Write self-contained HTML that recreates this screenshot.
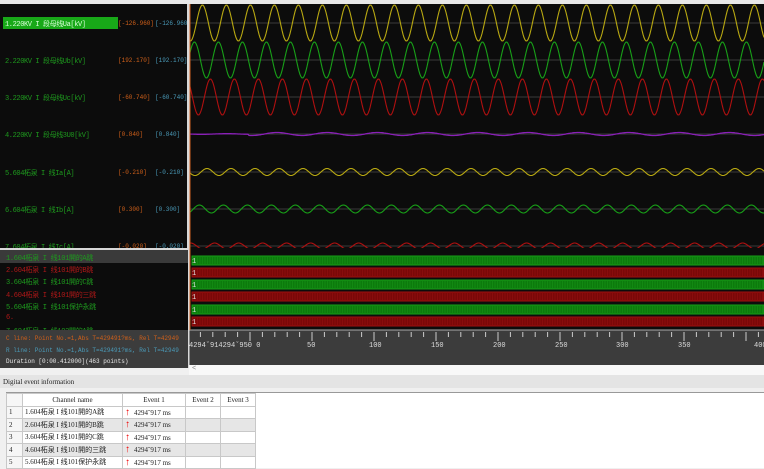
<!DOCTYPE html>
<html><head><meta charset="utf-8"><style>
*{margin:0;padding:0;box-sizing:border-box}
body{width:764px;height:468px;overflow:hidden;background:#f0f0f0;font-family:"Liberation Mono","Noto Sans CJK SC",monospace;position:relative}
.a{position:absolute;white-space:nowrap}
#left{left:0;top:4px;width:188px;height:244px;background:#0c0c0c;overflow:hidden}
.lbl{font-size:7px;color:#1e9a1e;letter-spacing:-0.4px}
.v1{font-size:6px;color:#d0601a}
.v2{font-size:6px;color:#4a9ab8}
#dl{left:0;top:250px;width:188px;height:80px;background:#0c0c0c;overflow:hidden}
.dr{position:absolute;left:6px;font-size:7px;letter-spacing:-0.3px}
#info{left:0;top:330px;width:188px;height:38px;background:#3c3c3c;font-size:6px;overflow:hidden}
table{border-collapse:collapse;font-size:7px;font-family:"Liberation Serif","Noto Sans CJK SC",serif}
td{border:1px solid #c8c8c8;height:12.5px;padding:0 2px;background:#fff;color:#222}
tr.g td{background:#e6e6e6}
td.n{background:#f6f6f6!important;width:16px}
.ar{color:#e00;font-size:10px;font-weight:bold;margin-right:4px}
</style></head><body>
<div class="a" style="left:0;top:0;width:764px;height:4px;background:#e8e8e8"></div>
<div class="a" id="left">
<div class="a" style="left:3px;top:13px;width:115px;height:12px;background:#18a818"></div>
<div class="a lbl" style="left:5px;top:15px;color:#d8ffd8">1.220KV I 段母线Ua[kV]</div>
<div class="a v1" style="left:118px;top:16px">[-126.960]</div><div class="a v2" style="left:155px;top:16px">[-126.960</div>
<div class="a lbl" style="left:5px;top:52px">2.220KV I 段母线Ub[kV]</div>
<div class="a v1" style="left:118px;top:53px">[192.170]</div><div class="a v2" style="left:155px;top:53px">[192.170]</div>
<div class="a lbl" style="left:5px;top:89px">3.220KV I 段母线Uc[kV]</div>
<div class="a v1" style="left:118px;top:90px">[-60.740]</div><div class="a v2" style="left:155px;top:90px">[-60.740]</div>
<div class="a lbl" style="left:5px;top:126px">4.220KV I 段母线3U0[kV]</div>
<div class="a v1" style="left:118px;top:127px">[0.840]</div><div class="a v2" style="left:155px;top:127px">[0.840]</div>
<div class="a lbl" style="left:5px;top:164px">5.604柘泉 I 线Ia[A]</div>
<div class="a v1" style="left:118px;top:165px">[-0.210]</div><div class="a v2" style="left:155px;top:165px">[-0.210]</div>
<div class="a lbl" style="left:5px;top:201px">6.604柘泉 I 线Ib[A]</div>
<div class="a v1" style="left:118px;top:202px">[0.300]</div><div class="a v2" style="left:155px;top:202px">[0.300]</div>
<div class="a lbl" style="left:5px;top:238px">7.604柘泉 I 线Ic[A]</div>
<div class="a v1" style="left:118px;top:239px">[-0.020]</div><div class="a v2" style="left:155px;top:239px">[-0.020]</div>
</div>
<div class="a" style="left:0;top:248px;width:764px;height:2px;background:#d8d8d8"></div>
<div class="a" style="left:187px;top:4px;width:2px;height:364px;background:#d8d8d8"></div>
<div class="a" id="dl">
<div class="a" style="left:0;top:0;width:188px;height:13px;background:#3a3a3a"></div>
<div class="dr" style="top:3px;color:#1e9a1e">1.604柘泉 I 线101開的A跳</div>
<div class="dr" style="top:15px;color:#b01818">2.604柘泉 I 线101開的B跳</div>
<div class="dr" style="top:27px;color:#1e9a1e">3.604柘泉 I 线101開的C跳</div>
<div class="dr" style="top:40px;color:#b01818">4.604柘泉 I 线101開的三跳</div>
<div class="dr" style="top:52px;color:#1e9a1e">5.604柘泉 I 线101保护永跳</div>
<div class="dr" style="top:64px;color:#b01818">6.</div>
<div class="dr" style="top:76px;color:#1e9a1e">7.604柘泉 I 线102開的A跳</div>
</div>
<div class="a" id="info">
<div class="a" style="left:6px;top:5px;color:#d0601a">C line: Point No.=1,Abs T=429491?ms,  Rel T=42949</div>
<div class="a" style="left:6px;top:17px;color:#4a9ab8">R line: Point No.=1,Abs T=429491?ms,  Rel T=42949</div>
<div class="a" style="left:6px;top:28px;color:#e8e8e8">Duration [0:00.412000](463 points)</div>
</div>
<svg class="a" style="left:189px;top:4px" width="575" height="364" id="sv"></svg>
<div class="a" style="left:189px;top:365px;width:575px;height:10px;background:#f8f8f8;font-size:7px;color:#888;padding-left:3px">&lt;</div>
<div class="a" style="left:0;top:375px;width:764px;height:13px;background:#e4e4e4;font-size:7px;color:#222;padding:3px 0 0 3px;font-family:'Liberation Serif',serif">Digital event information</div>
<div class="a" style="left:6px;top:392px;width:758px;height:76px;background:#fff;border-left:1px solid #999;border-top:1px solid #999"></div>
<table class="a" style="left:6px;top:393px">
<tr><td class="n"></td><td style="width:100px;text-align:center">Channel name</td><td style="width:63px;text-align:center">Event 1</td><td style="width:35px;text-align:center">Event 2</td><td style="width:35px;text-align:center">Event 3</td></tr>
<tr><td class="n">1</td><td>1.604柘泉 I 线101開的A跳</td><td><span class="ar">↑</span>4294ˇ917 ms</td><td></td><td></td></tr>
<tr class="g"><td class="n">2</td><td>2.604柘泉 I 线101開的B跳</td><td><span class="ar">↑</span>4294ˇ917 ms</td><td></td><td></td></tr>
<tr><td class="n">3</td><td>3.604柘泉 I 线101開的C跳</td><td><span class="ar">↑</span>4294ˇ917 ms</td><td></td><td></td></tr>
<tr class="g"><td class="n">4</td><td>4.604柘泉 I 线101開的三跳</td><td><span class="ar">↑</span>4294ˇ917 ms</td><td></td><td></td></tr>
<tr><td class="n">5</td><td>5.604柘泉 I 线101保护永跳</td><td><span class="ar">↑</span>4294ˇ917 ms</td><td></td><td></td></tr>
</table>
<script>
var s='<rect width="575" height="244" fill="#0c0c0c"/>';
var W=575,P=24;
function wave(c,A,ph,col,w){var d='';for(var x=0;x<=W;x+=1){var y=c+A*Math.sin(2*Math.PI*x/P+ph);d+=(x?'L':'M')+x+' '+y.toFixed(1);}return '<path d="'+d+'" stroke="'+col+'" stroke-width="'+(w||1.1)+'" fill="none"/>';}
[19,56,93,130,168,205,242].forEach(function(y){s+='<line x1="0" x2="575" y1="'+y+'" y2="'+y+'" stroke="#3a3a3a"/>';});
s+=wave(19,18,1.2,'#b8a812');s+=wave(56,18,1.2+2.09,'#18a018');s+=wave(93,18,1.2-2.09,'#b01010');
var d='';for(var x=0;x<=W;x++){var a=x<60?0.3:1.5;d+=(x?'L':'M')+x+' '+(130+a*Math.sin(x/8)).toFixed(1);}s+='<path d="'+d+'" stroke="#8a20b8" stroke-width="1.3" fill="none"/>';
s+=wave(168,3.5,0,'#b8a812');s+=wave(205,4,2,'#18a018');s+=wave(242,3,-2,'#b01010');
s+='<rect x="0" y="244" width="575" height="82" fill="#0c0c0c"/>';
var ys=[252,264,276,288,301,313];
ys.forEach(function(y,i){var g=i%2==0;s+='<rect x="3" y="'+y+'" width="572" height="9" fill="'+(g?'#0c7a0c':'#7a0808')+'" stroke="'+(g?'#18a018':'#a01010')+'"/>';
var v='';for(var x=6;x<575;x+=2.5)v+='M'+x+' '+(y+1)+'V'+(y+8);s+='<path d="'+v+'" stroke="'+(g?'#1a9a1a':'#9a1414')+'" stroke-width="0.8" opacity="0.6"/>';
s+='<text x="3" y="'+(y+7)+'" fill="#ddd" font-size="7" font-family="Liberation Mono">1</text>';});
s+='<rect x="0" y="326" width="575" height="35" fill="#3c3c3c"/><line x1="0" x2="575" y1="326" y2="326" stroke="#aaa"/>';
for(var i=0;i<60;i++){var x=61+i*12.4-62;if(x<0)continue;var big=i%5==0;s+='<line x1="'+x+'" x2="'+x+'" y1="328" y2="'+(big?337:333)+'" stroke="#ccc"/>';}
s+='<text x="0" y="343" fill="#ddd" font-size="7" font-family="Liberation Mono">4294ˇ914294ˇ950 0</text>';
[[50,123],[100,185],[150,247],[200,309],[250,371],[300,432],[350,494],[400,570]].forEach(function(t){s+='<text x="'+(t[1]-5)+'" y="343" fill="#ddd" font-size="7" font-family="Liberation Mono">'+t[0]+'</text>';});
s+='<line x1="1" x2="1" y1="0" y2="326" stroke="#d06020"/><line x1="0" x2="0" y1="0" y2="361" stroke="#ddd"/>';
document.getElementById('sv').innerHTML=s;
</script>
</body></html>
